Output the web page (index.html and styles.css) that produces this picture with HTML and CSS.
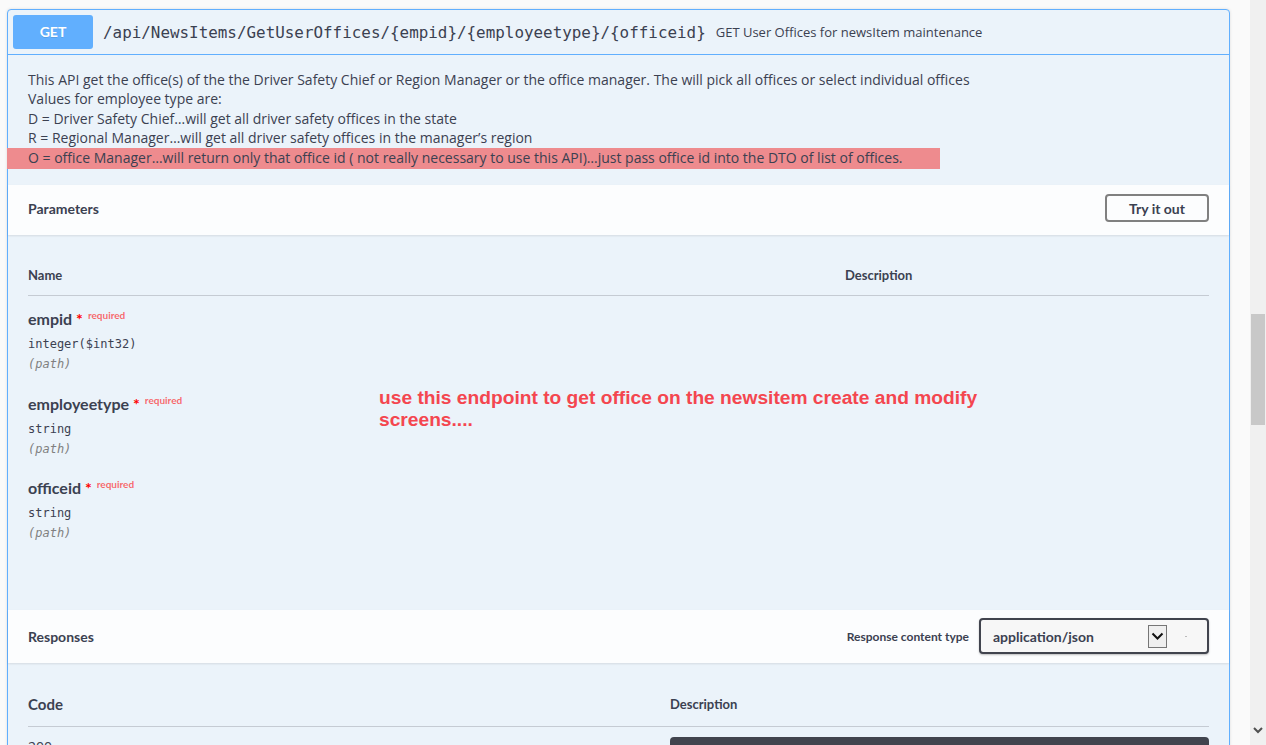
FILE: index.html
```html
<!DOCTYPE html>
<html>
<head>
<meta charset="utf-8">
<link rel="stylesheet" href="styles.css">
</head>
<body>
<div class="page">
  <div class="main">
    <div class="opblock">
      <div class="summary">
        <span class="method">GET</span>
        <span class="path">/api/NewsItems/GetUserOffices/{empid}/{employeetype}/{officeid}</span>
        <span class="summary-desc">GET User Offices for newsItem maintenance</span>
      </div>
      <div class="description">
        <div>This API get the office(s) of the the Driver Safety Chief or Region Manager or the office manager. The will pick all offices or select individual offices</div>
        <div>Values for employee type are:</div>
        <div>D = Driver Safety Chief…will get all driver safety offices in the state</div>
        <div>R = Regional Manager…will get all driver safety offices in the manager’s region</div>
        <div class="hl">O = office Manager…will return only that office id ( not really necessary to use this API)…just pass office id into the DTO of list of offices.</div>
      </div>
      <div class="section-header">
        <h4 class="section-title">Parameters</h4>
        <button class="try-btn">Try it out</button>
      </div>
      <div class="params">
        <div class="table-head">
          <div class="col-name">Name</div>
          <div>Description</div>
        </div>
        <div class="param-grid">
          <div class="param">
            <div class="pname">empid<span class="star">&nbsp;*</span><span class="req">required</span></div>
            <div class="ptype">integer($int32)</div>
            <div class="pin">(path)</div>
          </div>
          <div class="cell"></div>
          <div class="param">
            <div class="pname">employeetype<span class="star">&nbsp;*</span><span class="req">required</span></div>
            <div class="ptype">string</div>
            <div class="pin">(path)</div>
          </div>
          <div class="cell"><div class="note">use this endpoint to get office on the newsitem create and modify screens....</div></div>
          <div class="param">
            <div class="pname">officeid<span class="star">&nbsp;*</span><span class="req">required</span></div>
            <div class="ptype">string</div>
            <div class="pin">(path)</div>
          </div>
          <div class="cell"></div>
        </div>
      </div>
      <div class="section-header resp-header">
        <h4 class="section-title">Responses</h4>
        <div class="content-type">
          <span class="ct-label">Response content type</span>
          <div class="select">
            <span>application/json</span>
            <span class="arrow-box"><svg width="13" height="9" viewBox="0 0 13 9"><path d="M1.5 1.5 L6.5 6.5 L11.5 1.5" fill="none" stroke="#111" stroke-width="2"/></svg></span>
            <span class="dot"></span>
          </div>
        </div>
      </div>
      <div class="responses">
        <div class="table-head resp-head">
          <div class="col-code">Code</div>
          <div class="col-desc">Description</div>
        </div>
        <div class="resp-row">
          <div class="col-code code-val">200</div>
          <div class="dark-box"></div>
        </div>
      </div>
    </div>
  </div>
  <div class="scrollbar">
    <div class="thumb"></div>
    <div class="arrow-down"><svg width="16" height="16" viewBox="0 0 16 16"><path d="M4 6 L8 10 L12 6" fill="none" stroke="#505050" stroke-width="2"/></svg></div>
  </div>
</div>
</body>
</html>
```

FILE: styles.css
```css
html, body {
  margin: 0;
  padding: 0;
  background: #fafafa;
  overflow: hidden;
}
.page {
  display: flex;
  height: 745px;
  overflow: hidden;
}
.main {
  flex: 1;
  padding: 9px 20px 0 7px;
  overflow: hidden;
  min-width: 0;
}
.opblock {
  border: 1px solid #61affe;
  border-radius: 4px;
  background: #ebf3fa;
  box-shadow: 0 0 3px rgba(0,0,0,.12);
  color: #3b4151;
}
.summary {
  display: flex;
  align-items: center;
  padding: 5px;
  border-bottom: 1px solid #61affe;
}
.method {
  display: block;
  flex: none;
  width: 80px;
  height: 34px;
  line-height: 34px;
  text-align: center;
  background: #61affe;
  color: #fff;
  border-radius: 3px;
  font-family: "Lato", sans-serif;
  font-weight: 700;
  font-size: 14px;
  text-shadow: 0 1px 0 rgba(0,0,0,.1);
}
.path {
  padding: 0 10px;
  font: 15.9px "DejaVu Sans Mono", monospace;
  color: #3b4151;
}
.summary-desc {
  font: 13px "Open Sans", sans-serif;
  color: #3b4151;
}
.description {
  padding: 15px 20px 16px;
  font: 14px "Open Sans", sans-serif;
  line-height: 19.25px;
  color: #3b4151;
}
.hl {
  margin-top: 1px;
  margin-left: -21px;
  padding-left: 21px;
  padding-bottom: 2px;
  width: 912px;
  background: #ee8b8e;
}
.section-header {
  display: flex;
  align-items: center;
  justify-content: space-between;
  padding: 9px 20px 13px;
  background: #fcfdfe;
  box-shadow: 0 1px 2px rgba(0,0,0,.1);
}
.section-title {
  margin: 0;
  font: 700 14px "Lato", sans-serif;
  color: #3b4151;
}
.try-btn {
  width: 104px;
  height: 28px;
  border: 2px solid #808080;
  border-radius: 4px;
  background: transparent;
  font: 700 14px "Lato", sans-serif;
  color: #3b4151;
  padding: 0;
}
.params {
  padding: 20px 20px 60.5px;
}
.table-head {
  display: flex;
  padding: 12px 0 11px;
  border-bottom: 1px solid #c5cbd3;
  font-family: "Lato", sans-serif;
  font-weight: 700;
  font-size: 13px;
  line-height: 17px;
  color: #3b4151;
}
.col-name {
  width: 817px;
}
.param-grid {
  display: grid;
  grid-template-columns: 351px 1fr;
}
.param {
  padding: 13px 0 6.5px;
}
.cell {
  padding-top: 6px;
}
.pname {
  font: 700 16px "Lato", sans-serif;
  line-height: 20px;
  color: #3b4151;
}
.star {
  color: red;
}
.req {
  position: relative;
  top: -6px;
  padding: 5px;
  font: 700 10px "Lato", sans-serif;
  color: rgba(255,0,0,.6);
}
.ptype {
  margin-top: 5px;
  font: 12px "DejaVu Sans Mono", monospace;
  line-height: 20px;
  color: #3b4151;
}
.pin {
  font: italic 12px "DejaVu Sans Mono", monospace;
  line-height: 20px;
  color: gray;
}
.note {
  width: 660px;
  font: 700 19.2px "Liberation Sans", Arial, sans-serif;
  line-height: 22px;
  color: #f4464f;
}
.resp-header {
  padding: 8px 20px 9px;
}
.content-type {
  display: flex;
  align-items: center;
}
.ct-label {
  margin-right: 10px;
  font: 700 12px "Lato", sans-serif;
  color: #3b4151;
}
.select {
  box-sizing: border-box;
  width: 230px;
  height: 36px;
  display: flex;
  align-items: center;
  padding: 0 20px 0 12px;
  border: 2px solid #41444e;
  border-radius: 4px;
  background: #f7f7f7;
  box-shadow: 0 1px 2px rgba(0,0,0,.25);
  font: 700 14px "Lato", sans-serif;
  color: #3b4151;
}
.arrow-box {
  box-sizing: border-box;
  margin-left: auto;
  width: 19px;
  height: 23px;
  border: 1px solid #767676;
  background: #efefef;
  display: flex;
  align-items: center;
  justify-content: center;
}
.dot {
  margin-left: 18px;
  width: 2px;
  height: 1px;
  background: #bbb;
}
.responses {
  padding: 21px 20px 20px;
}
.resp-head {
  padding: 10px 0 12px;
  line-height: 20px;
  align-items: center;
}
.col-code {
  width: 642px;
  flex: none;
}
.resp-head .col-code {
  font-size: 15px;
  line-height: 20px;
}
.col-desc {
  font-size: 13px;
  line-height: 20px;
}
.resp-row {
  display: flex;
  padding-top: 10px;
}
.code-val {
  font: 14px "Open Sans", sans-serif;
  line-height: 20px;
  color: #3b4151;
}
.dark-box {
  flex: 1;
  height: 200px;
  background: #41444e;
  border-radius: 4px;
}
.scrollbar {
  width: 16px;
  flex: none;
  background: #f0f0f0;
  display: flex;
  flex-direction: column;
}
.thumb {
  margin: 314px 1px 0;
  height: 111px;
  background: #c8c8c8;
}
.arrow-down {
  margin-top: auto;
  height: 16px;
  margin-bottom: 7px;
}
.arrow-down svg {
  display: block;
}
```
